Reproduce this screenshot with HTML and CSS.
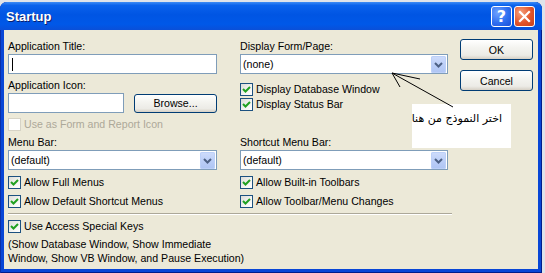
FILE: index.html
```html
<!DOCTYPE html>
<html>
<head>
<meta charset="utf-8">
<link rel="stylesheet" href="styles.css">
</head>
<body>
<div class="window">
  <div class="titlebar">
    <span class="title">Startup</span>
    <div class="tbtns">
      <span class="tbtn help">?</span>
      <span class="tbtn close"><svg width="21" height="21" viewBox="0 0 21 21"><path d="M6 6 L15 15 M15 6 L6 15" stroke="#fff" stroke-width="2.2" stroke-linecap="square"/></svg></span>
    </div>
  </div>
  <div class="body">
    <div class="top">
      <div class="col">
        <div class="label">Application Title:</div>
        <div class="input wide"><span class="caret"></span></div>
        <div class="label gap5">Application Icon:</div>
        <div class="iconrow">
          <div class="input small"></div>
          <div class="btn browse">Browse...</div>
        </div>
        <div class="check disabled mt4"><span class="box"></span>Use as Form and Report Icon</div>
      </div>
      <div class="col">
        <div class="label">Display Form/Page:</div>
        <div class="combo"><span class="val">(none)</span><span class="drop"><svg width="15" height="17" viewBox="0 0 15 17"><polyline points="4,7 7.5,10.5 11,7" fill="none" stroke="#4d6185" stroke-width="2"/></svg></span></div>
        <div class="check mt8"><span class="box on"><svg width="11" height="11" viewBox="0 0 11 11"><polyline points="2,5 4.5,7.5 9,3" fill="none" stroke="#21a121" stroke-width="2"/></svg></span>Display Database Window</div>
        <div class="check"><span class="box on"><svg width="11" height="11" viewBox="0 0 11 11"><polyline points="2,5 4.5,7.5 9,3" fill="none" stroke="#21a121" stroke-width="2"/></svg></span>Display Status Bar</div>
      </div>
      <div class="btncol">
        <div class="btn big">OK</div>
        <div class="btn big">Cancel</div>
      </div>
    </div>
    <div class="menus">
      <div class="col">
        <div class="label">Menu Bar:</div>
        <div class="combo mt2"><span class="val">(default)</span><span class="drop"><svg width="15" height="17" viewBox="0 0 15 17"><polyline points="4,7 7.5,10.5 11,7" fill="none" stroke="#4d6185" stroke-width="2"/></svg></span></div>
        <div class="check mt5"><span class="box on"><svg width="11" height="11" viewBox="0 0 11 11"><polyline points="2,5 4.5,7.5 9,3" fill="none" stroke="#21a121" stroke-width="2"/></svg></span>Allow Full Menus</div>
        <div class="check mt4"><span class="box on"><svg width="11" height="11" viewBox="0 0 11 11"><polyline points="2,5 4.5,7.5 9,3" fill="none" stroke="#21a121" stroke-width="2"/></svg></span>Allow Default Shortcut Menus</div>
      </div>
      <div class="col">
        <div class="label">Shortcut Menu Bar:</div>
        <div class="combo mt2"><span class="val">(default)</span><span class="drop"><svg width="15" height="17" viewBox="0 0 15 17"><polyline points="4,7 7.5,10.5 11,7" fill="none" stroke="#4d6185" stroke-width="2"/></svg></span></div>
        <div class="check mt5"><span class="box on"><svg width="11" height="11" viewBox="0 0 11 11"><polyline points="2,5 4.5,7.5 9,3" fill="none" stroke="#21a121" stroke-width="2"/></svg></span>Allow Built-in Toolbars</div>
        <div class="check mt4"><span class="box on"><svg width="11" height="11" viewBox="0 0 11 11"><polyline points="2,5 4.5,7.5 9,3" fill="none" stroke="#21a121" stroke-width="2"/></svg></span>Allow Toolbar/Menu Changes</div>
      </div>
    </div>
    <div class="sep"></div>
    <div class="keys">
      <div class="check"><span class="box on"><svg width="11" height="11" viewBox="0 0 11 11"><polyline points="2,5 4.5,7.5 9,3" fill="none" stroke="#21a121" stroke-width="2"/></svg></span>Use Access Special Keys</div>
      <div class="note">(Show Database Window, Show Immediate<br>Window, Show VB Window, and Pause Execution)</div>
    </div>

    <div class="annot" dir="rtl">اختر النموذج من هنا</div>
    <svg class="arrow" width="100" height="50" viewBox="0 0 100 50">
      <line x1="1" y1="1" x2="62" y2="35" stroke="#000" stroke-width="1"/>
      <line x1="1" y1="1" x2="29" y2="7" stroke="#000" stroke-width="1"/>
      <line x1="1" y1="1" x2="9" y2="15" stroke="#000" stroke-width="1"/>
    </svg>
  </div>
</div>
</body>
</html>
```
FILE: styles.css
```css
* { box-sizing: border-box; }
html, body { margin: 0; padding: 0; }
body {
  background: #dfe3ea;
  font-family: "Liberation Sans", Arial, sans-serif;
  font-size: 10.6px;
  color: #000;
  overflow: hidden;
  width: 545px;
  height: 273px;
}
.window {
  margin-top: 2px;
  width: 542px;
  height: 271px;
  background: #0846d6;
  border-radius: 7px 7px 0 0;
  display: flex;
  flex-direction: column;
  padding: 0 4px 4px 4px;
  box-shadow: inset 1px 0 0 #0a2fa8, inset -1px 0 0 #001d8a, inset 0 -1px 0 #001d8a;
}
.titlebar {
  height: 28px;
  margin: 0 -4px;
  padding: 0 7px 0 6px;
  border-radius: 7px 7px 0 0;
  background: linear-gradient(to bottom, #3d8cf5 0%, #0a62ec 12%, #0055e3 45%, #0058e8 80%, #0a4fd8 100%);
  display: flex;
  align-items: center;
  justify-content: space-between;
}
.title {
  color: #fff;
  font-weight: bold;
  font-size: 13px;
  text-shadow: 1px 1px 0 #0a1f6e;
  padding-top: 1px;
}
.tbtns { display: flex; gap: 2px; padding-top: 1px; }
.tbtn {
  width: 21px;
  height: 21px;
  border: 1px solid #fff;
  border-radius: 3px;
  display: flex;
  align-items: center;
  justify-content: center;
  color: #fff;
  font-weight: bold;
  font-size: 16px;
  font-family: "DejaVu Sans", sans-serif;
}
.tbtn svg { margin: -1px; }
.help { background: radial-gradient(circle at 30% 30%, #6fa3ff 0%, #2f6ff0 55%, #1c4fd8 100%); }
.close { background: radial-gradient(circle at 30% 30%, #f5a07c 0%, #e2542a 55%, #c7401a 100%); }

.body {
  position: relative;
  flex: 1;
  background: #ece9d8;
  padding: 10px 0 0 4px;
}
.top {
  display: grid;
  grid-template-columns: 209px 208px 72px;
  column-gap: 23px;
  height: 96px;
}
.btncol { margin-left: -11px; margin-top: -1px; display: flex; flex-direction: column; gap: 10px; }
.menus {
  display: grid;
  grid-template-columns: 209px 208px;
  column-gap: 23px;
}
.col { display: flex; flex-direction: column; }
.label { height: 13px; line-height: 13px; white-space: nowrap; }
.gap5 { margin-top: 5px; }
.mt2 { margin-top: 2px; }
.mt4 { margin-top: 4px; }
.mt5 { margin-top: 5px; }
.mt8 { margin-top: 8px; }
.input {
  height: 20px;
  background: #fff;
  border: 1px solid #7f9db9;
  margin-top: 1px;
  position: relative;
}
.wide { width: 209px; }
.small { width: 116px; }
.caret {
  position: absolute;
  left: 3px;
  top: 3px;
  width: 1px;
  height: 13px;
  background: #000;
}
.iconrow { display: flex; align-items: center; justify-content: space-between; margin-top: 1px; }
.iconrow .input { margin-top: 0; }
.btn {
  border: 1px solid #003c74;
  border-radius: 3px;
  background: linear-gradient(to bottom, #ffffff 0%, #f4f4f0 40%, #ecebe6 80%, #d6d0c5 100%);
  display: flex;
  align-items: center;
  justify-content: center;
  white-space: nowrap;
}
.browse { width: 83px; height: 19px; }
.big { width: 73px; height: 21px; }
.combo {
  height: 20px;
  background: #fff;
  border: 1px solid #7f9db9;
  margin-top: 1px;
  display: flex;
  align-items: center;
  justify-content: space-between;
  padding: 0 1px 0 2px;
}
.val { line-height: 13px; }
.drop {
  width: 15px;
  height: 17px;
  border-radius: 2px;
  background: linear-gradient(to bottom, #cfdcfb 0%, #b9cdf7 60%, #aec4f3 100%);
  box-shadow: inset 0 0 0 1px #bcd0f8;
  display: flex;
}
.check {
  height: 15px;
  display: flex;
  align-items: center;
  white-space: nowrap;
  line-height: 13px;
}
.box {
  width: 13px;
  height: 13px;
  border: 1px solid #1c5180;
  background: linear-gradient(135deg, #dcdcd7 0%, #f5f5f2 60%, #ffffff 100%);
  margin-right: 3px;
  flex: none;
  display: flex;
}
.disabled { color: #aca899; }
.disabled .box { border-color: #d6d3c6; background: #fff; }
.sep {
  margin: 4px 0 0 0;
  width: 444px;
  height: 2px;
  border-top: 1px solid #aca899;
  border-bottom: 1px solid #fff;
}
.keys { margin-top: 4px; }
.note { margin-top: 3px; line-height: 14px; white-space: nowrap; }

.annot {
  position: absolute;
  left: 408px;
  top: 74px;
  width: 99px;
  height: 44px;
  background: #fff;
  font-family: "DejaVu Sans", sans-serif;
  font-size: 11px;
  padding: 8px 9px 0 0;
  text-align: right;
  white-space: nowrap;
}
.arrow {
  position: absolute;
  left: 387px;
  top: 42px;
  overflow: visible;
}
```
